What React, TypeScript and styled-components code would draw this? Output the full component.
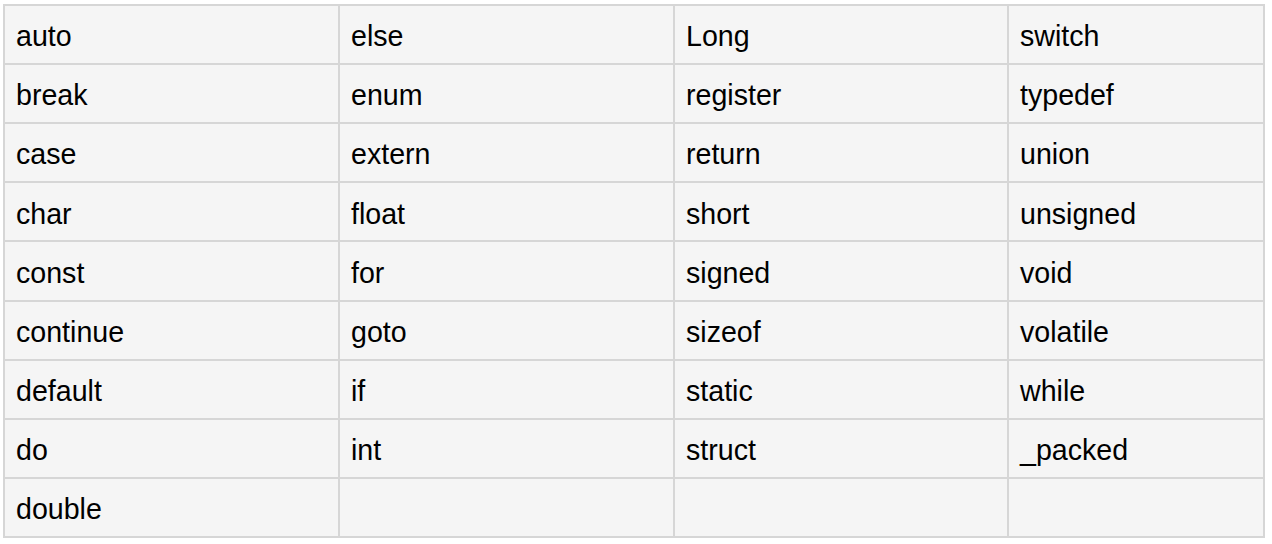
import React from "react";
import styled, { createGlobalStyle } from "styled-components";

const Global = createGlobalStyle`
  html, body { margin: 0; padding: 0; background: #ffffff; }
  body { font-family: "Liberation Sans", Arial, Helvetica, sans-serif; }
`;

const Page = styled.div`
  padding: 4px 7px 6px 3px;
`;

const Table = styled.div`
  display: grid;
  grid-template-columns: 333fr 333fr 332fr 254fr;
  grid-auto-rows: 1fr;
  gap: 2px;
  padding: 2px;
  height: 534px;
  box-sizing: border-box;
  background: #d6d6d6;
`;

const Cell = styled.div`
  display: flex;
  align-items: center;
  padding: 4px 10px 0 11px;
  background: #f5f5f5;
  color: #000000;
  font-size: 28.6px;
  line-height: 1;
  white-space: nowrap;
`;

const rows: string[][] = [
  ["auto", "else", "Long", "switch"],
  ["break", "enum", "register", "typedef"],
  ["case", "extern", "return", "union"],
  ["char", "float", "short", "unsigned"],
  ["const", "for", "signed", "void"],
  ["continue", "goto", "sizeof", "volatile"],
  ["default", "if", "static", "while"],
  ["do", "int", "struct", "_packed"],
  ["double", "", "", ""],
];

export default function App() {
  return (
    <>
      <Global />
      <Page>
        <Table>
          {rows.flatMap((row, r) =>
            row.map((word, c) => <Cell key={`${r}-${c}`}>{word}</Cell>)
          )}
        </Table>
      </Page>
    </>
  );
}
